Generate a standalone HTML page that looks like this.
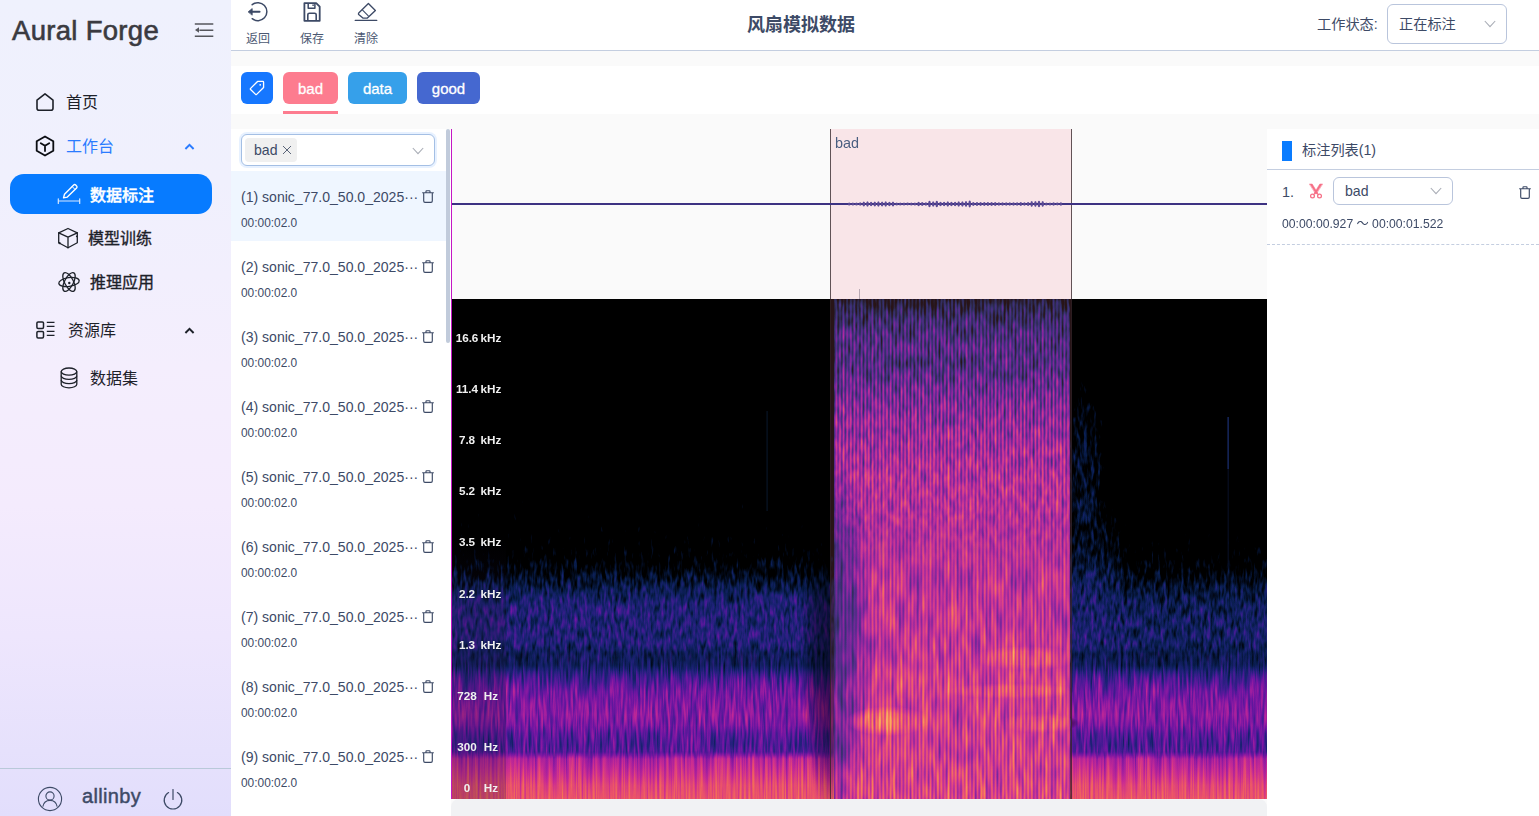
<!DOCTYPE html>
<html lang="zh-CN">
<head>
<meta charset="utf-8">
<title>Aural Forge</title>
<style>
*{box-sizing:border-box;margin:0;padding:0}
html,body{width:1539px;height:816px;overflow:hidden;background:#fafafa}
body{font-family:"Liberation Sans","Noto Sans CJK SC",sans-serif;color:#3d4a66;font-size:14px;position:relative}
.abs{position:absolute}
svg{display:block;overflow:visible}
/* sidebar */
#side{left:0;top:0;width:231px;height:816px;background:linear-gradient(180deg,#eff1fd 0%,#f0f0fd 22%,#f4eefd 45%,#f4ebfd 62%,#eee6fd 78%,#e6e1fc 92%,#e2defc 100%)}
#logo{left:12px;top:11px;font-size:27.5px;line-height:40px;color:#3a3a40;white-space:nowrap;letter-spacing:0.3px;-webkit-text-stroke:0.6px #3a3a40}
.mi{left:0;width:231px;height:40px;font-size:16px;line-height:42px;color:#1d2129;white-space:nowrap}
.mi span{position:absolute;top:0}
.mi svg{position:absolute}
#act{left:10px;top:174px;width:202px;height:40px;border-radius:14px;background:#077bff}
/* topbar */
#top{left:231px;top:0;width:1308px;height:51px;background:#fff;border-bottom:1px solid #c4cee0}
.tb{top:0;width:40px;text-align:center;font-size:12px;color:#4b5872;line-height:14px}
.tb svg{margin:1px auto 0}
.tb div{margin-top:8.5px}
#title{left:231px;width:1140px;top:11px;text-align:center;font-size:18px;line-height:28px;font-weight:bold;color:#3d4a66}
#band{left:231px;top:66px;width:1308px;height:48px;background:#fff}
.tag{top:72px;height:32px;border-radius:6px;color:#fff;font-size:15px;line-height:34px;text-align:center;-webkit-text-stroke:0.3px #fff}
.sel{border:1px solid #b9c5dc;border-radius:6px;background:#fff}
/* list */
#list{left:231px;top:129px;width:220px;height:687px;background:#fff}
.it{left:231px;width:215px;height:70px}
.it .t{position:absolute;left:10px;top:16px;font-size:14.05px;line-height:20px;white-space:nowrap;color:#3d4a66}
.it .d{position:absolute;left:10px;top:44px;font-size:11.9px;line-height:16px;color:#3d4a66}
.it svg{position:absolute;left:191px;top:19px}
.fl{font-family:"Liberation Sans",sans-serif;font-weight:bold;font-size:11.7px;line-height:14px;color:#f0f0f0;white-space:nowrap;text-align:center}
/* right */
#right{left:1267px;top:129px;width:272px;height:687px;background:#fff}
</style>
</head>
<body>

<div id="side" class="abs"></div>
<div id="logo" class="abs">Aural Forge</div>
<svg class="abs" style="left:194px;top:22px" width="20" height="16" viewBox="0 0 20 16" fill="none" stroke="#55565c" stroke-width="1.6"><path d="M0.8 2H19.3M5.4 8.2H19.3M0.8 14.2H19.3"/><path d="M1 8L5 5.3V10.7Z" fill="#55565c" stroke="none"/></svg>

<div class="abs mi" style="top:82px"><svg style="left:35px;top:10px" width="20" height="20" viewBox="0 0 20 20" fill="none" stroke="#1d2129" stroke-width="1.6" stroke-linejoin="round"><path d="M2 8.2L10 1.8L18 8.2V16.2Q18 18.2 16 18.2H4Q2 18.2 2 16.2Z"/></svg><span style="left:66px">首页</span></div>

<div class="abs mi" style="top:126px;color:#2a7bff"><svg style="left:35px;top:9px" width="20" height="22" viewBox="0 0 20 22" fill="none" stroke="#0b0d12" stroke-width="1.8" stroke-linejoin="round" stroke-linecap="round"><path d="M10 1.5L18.3 6.2V15.8L10 20.5L1.7 15.8V6.2Z"/><path d="M5.8 8.2L10 10.8L14.2 8.2M10 10.8V16"/></svg><span style="left:66px">工作台</span><svg style="left:184px;top:16px" width="11" height="8" viewBox="0 0 11 8" fill="none" stroke="#2a7bff" stroke-width="1.9"><path d="M1.4 7L5.5 2.8L9.6 7"/></svg></div>

<div id="act" class="abs"></div>
<div class="abs mi" style="top:175px;color:#fff;font-weight:500"><svg style="left:57px;top:8px" width="24" height="24" viewBox="0 0 24 24" fill="none" stroke="#fff" stroke-width="1.4" stroke-linejoin="round" stroke-linecap="round"><path d="M6.5 14.9L7.5 11.3L16.7 2Q17.7 1 18.7 2L19.6 2.9Q20.6 3.9 19.6 4.9L10.3 14.1Z"/><path d="M15.2 3.6L18 6.4" stroke-width="1"/><path d="M1.3 18H22.7M1.3 15.8V20.4M22.7 15.8V20.4" stroke-width="1.2" stroke="#d8e8ff"/></svg><span style="left:90px;-webkit-text-stroke:0.4px #fff">数据标注</span></div>

<div class="abs mi" style="top:218px"><svg style="left:57px;top:9px" width="22" height="22" viewBox="0 0 22 22" fill="none" stroke="#1d2129" stroke-width="1.3" stroke-linejoin="round" stroke-linecap="round"><path d="M11 1.5L20.3 5.8V15.8L11 20.8L1.7 15.8V5.8Z"/><path d="M1.7 5.8L11 10.2L20.3 5.8M11 10.2V20.8"/><circle cx="2.6" cy="16.2" r="1.1" fill="#1d2129" stroke="none"/><circle cx="19.8" cy="9.3" r="0.9" fill="#1d2129" stroke="none"/></svg><span style="left:88px;-webkit-text-stroke:0.35px #1d2129">模型训练</span></div>

<div class="abs mi" style="top:262px"><svg style="left:57px;top:9px" width="24" height="22" viewBox="0 0 24 22" fill="none" stroke="#1d2129" stroke-width="1.3"><ellipse cx="12" cy="11" rx="10.3" ry="4.4" transform="rotate(-8 12 11)"/><ellipse cx="12" cy="11" rx="10.3" ry="4.4" transform="rotate(62 12 11)"/><ellipse cx="12" cy="11" rx="10.3" ry="4.4" transform="rotate(-62 12 11)"/><circle cx="12.3" cy="12" r="1.2" fill="#1d2129" stroke="none"/></svg><span style="left:90px;-webkit-text-stroke:0.35px #1d2129">推理应用</span></div>

<div class="abs mi" style="top:310px"><svg style="left:36px;top:11px" width="20" height="18" viewBox="0 0 20 18" fill="none" stroke="#1d2129" stroke-width="1.5"><rect x="0.9" y="0.9" width="6.6" height="6.6" rx="1.2"/><rect x="0.9" y="10.4" width="6.6" height="6.6" rx="1.2"/><path d="M10.8 1.4H18.5M10.8 5.4H18.5M10.8 10.4H18.5M10.8 14.4H18.5" stroke-width="1.3"/></svg><span style="left:68px">资源库</span><svg style="left:184px;top:16px" width="11" height="8" viewBox="0 0 11 8" fill="none" stroke="#1d2129" stroke-width="1.9"><path d="M1.4 7L5.5 2.8L9.6 7"/></svg></div>

<div class="abs mi" style="top:358px"><svg style="left:60px;top:9px" width="18" height="22" viewBox="0 0 18 22" fill="none" stroke="#1d2129" stroke-width="1.3"><ellipse cx="9" cy="4.6" rx="7.8" ry="3.6"/><path d="M1.2 4.6V17.2C1.2 19.2 4.7 20.8 9 20.8S16.8 19.2 16.8 17.2V4.6"/><path d="M1.2 8.8C1.2 10.8 4.7 12.4 9 12.4S16.8 10.8 16.8 8.8M1.2 13C1.2 15 4.7 16.6 9 16.6S16.8 15 16.8 13"/></svg><span style="left:90px">数据集</span></div>

<div class="abs" style="left:0;top:768px;width:231px;height:1px;background:#b9c9d9"></div>
<svg class="abs" style="left:37px;top:786px" width="26" height="26" viewBox="0 0 26 26" fill="none" stroke="#3d4a66" stroke-width="1.1"><circle cx="13" cy="13" r="11.6"/><circle cx="13" cy="10" r="4.1"/><path d="M5.8 20.6C6.6 16.4 9.6 14.4 13 14.4S19.4 16.4 20.2 20.6"/></svg>
<div class="abs" style="left:82px;top:781px;font-size:20px;line-height:30px;color:#3d4a66;-webkit-text-stroke:0.45px #3d4a66;letter-spacing:0.35px">allinby</div>
<svg class="abs" style="left:162px;top:788px" width="22" height="22" viewBox="0 0 22 22" fill="none" stroke="#3d4a66" stroke-width="1.2" stroke-linecap="round"><path d="M11 1.5V11.5"/><path d="M6.6 4.6A8.8 8.8 0 1 0 15.4 4.6"/></svg>

<div id="top" class="abs"></div>
<div class="abs tb" style="left:238px"><svg width="24" height="22" viewBox="0 0 24 22" fill="none" stroke="#3d4a66" stroke-width="1.5" stroke-linecap="round" stroke-linejoin="round"><path d="M6.2 3.7A9 9 0 1 1 6.2 17.7"/><path d="M4 10.7H13.6" stroke-width="1.9"/><path d="M2.4 10.7L6.2 7.6V13.8Z" fill="#3d4a66" stroke-width="0.8"/></svg><div>返回</div></div>
<div class="abs tb" style="left:292px"><svg width="20" height="22" viewBox="0 0 20 22" fill="none" stroke="#3d4a66" stroke-width="1.8" stroke-linejoin="round"><path d="M2.4 2.2H14.2L17.7 5.7V19.8H2.4Z"/><path d="M6.2 2.2V7.2H12.9V2.2" stroke-width="1.5"/><rect x="10.4" y="3.4" width="1.4" height="1.6" fill="#3d4a66" stroke="none"/><path d="M5.8 19.8V13.8Q5.8 12.2 7.4 12.2H12.6Q14.2 12.2 14.2 13.8V19.8" stroke-width="1.6"/></svg><div>保存</div></div>
<div class="abs tb" style="left:346px"><svg width="24" height="22" viewBox="0 0 24 22" fill="none" stroke="#3d4a66" stroke-width="1.35" stroke-linejoin="round" stroke-linecap="round"><path d="M14.4 2.4L21.4 9.4L13.4 17.1H8.9L4.7 13.4Q4.1 12.8 4.7 12.1Z"/><path d="M8.6 9.2L14.3 14.9" stroke-width="1.1"/><path d="M1.2 19.4H22.8" stroke-width="1.2"/></svg><div>清除</div></div>
<div id="title" class="abs">风扇模拟数据</div>
<div class="abs" style="left:1317px;top:14px;font-size:14.2px;line-height:20px;color:#3d4a66">工作状态:</div>
<div class="abs sel" style="left:1387px;top:4px;width:120px;height:40px"></div>
<div class="abs" style="left:1399px;top:14px;font-size:14.2px;line-height:20px;color:#3d4a66">正在标注</div>
<div class="abs" style="left:1484px;top:20px"><svg width="12" height="8" viewBox="0 0 12 8" fill="none" stroke="#a9adb6" stroke-width="1.1"><path d="M0.8 1L6 6.6L11.2 1"/></svg></div>
<div id="band" class="abs"></div>
<div class="abs tag" style="left:241px;width:32px;background:#1677ff"><svg style="margin:8px 0 0 8px" width="16" height="16" viewBox="0 0 18 18" fill="none" stroke="#fff" stroke-width="1.5" stroke-linejoin="round"><path d="M9.6 1.6H15.6Q16.4 1.6 16.4 2.4V8.4L8.6 16.2Q8 16.8 7.4 16.2L1.8 10.6Q1.2 10 1.8 9.4Z"/><circle cx="12.6" cy="5.4" r="1" fill="#fff" stroke="none"/></svg></div>
<div class="abs tag" style="left:283px;width:55px;background:#fd7c8f">bad</div>
<div class="abs" style="left:283px;top:111px;width:55px;height:3px;background:#fd7c8f"></div>
<div class="abs tag" style="left:348px;width:59px;background:#36a0ea">data</div>
<div class="abs tag" style="left:417px;width:63px;background:#4568d0">good</div>
<div id="list" class="abs"></div>
<div class="abs" style="left:231px;top:171px;width:215px;height:70px;background:#eff6ff"></div>
<div class="abs sel" style="left:241px;top:134px;width:194px;height:32px;border-color:#a4bfe4;box-shadow:0 0 0 2px rgba(22,119,255,0.1)"></div>
<div class="abs" style="left:245px;top:138px;width:52px;height:24px;border-radius:4px;background:#f0f0f0;font-size:14.1px;line-height:24px;padding-left:9px;color:#3d4a66;white-space:nowrap">bad<svg style="position:absolute;left:37px;top:7px" width="10" height="10" viewBox="0 0 10 10" stroke="#5a6478" stroke-width="1" fill="none"><path d="M1 1L9 9M9 1L1 9"/></svg></div>
<div class="abs" style="left:412px;top:147px"><svg width="12" height="8" viewBox="0 0 12 8" fill="none" stroke="#a9adb6" stroke-width="1.1"><path d="M0.8 1L6 6.6L11.2 1"/></svg></div>
<div class="abs it" style="top:171px"><div class="t">(1) sonic_77.0_50.0_2025···</div><div class="d">00:00:02.0</div><svg width="12" height="13" viewBox="0 0 12 13" fill="none" stroke="#3d4a66" stroke-width="1.15" stroke-linejoin="round" stroke-linecap="round"><path d="M0.6 2.7H11.4M4 2.5V1.3Q4 0.7 4.6 0.7H7.4Q8 0.7 8 1.3V2.5M1.7 2.9V11Q1.7 12.3 3 12.3H9Q10.3 12.3 10.3 11V2.9"/></svg></div>
<div class="abs it" style="top:241px"><div class="t">(2) sonic_77.0_50.0_2025···</div><div class="d">00:00:02.0</div><svg width="12" height="13" viewBox="0 0 12 13" fill="none" stroke="#3d4a66" stroke-width="1.15" stroke-linejoin="round" stroke-linecap="round"><path d="M0.6 2.7H11.4M4 2.5V1.3Q4 0.7 4.6 0.7H7.4Q8 0.7 8 1.3V2.5M1.7 2.9V11Q1.7 12.3 3 12.3H9Q10.3 12.3 10.3 11V2.9"/></svg></div>
<div class="abs it" style="top:311px"><div class="t">(3) sonic_77.0_50.0_2025···</div><div class="d">00:00:02.0</div><svg width="12" height="13" viewBox="0 0 12 13" fill="none" stroke="#3d4a66" stroke-width="1.15" stroke-linejoin="round" stroke-linecap="round"><path d="M0.6 2.7H11.4M4 2.5V1.3Q4 0.7 4.6 0.7H7.4Q8 0.7 8 1.3V2.5M1.7 2.9V11Q1.7 12.3 3 12.3H9Q10.3 12.3 10.3 11V2.9"/></svg></div>
<div class="abs it" style="top:381px"><div class="t">(4) sonic_77.0_50.0_2025···</div><div class="d">00:00:02.0</div><svg width="12" height="13" viewBox="0 0 12 13" fill="none" stroke="#3d4a66" stroke-width="1.15" stroke-linejoin="round" stroke-linecap="round"><path d="M0.6 2.7H11.4M4 2.5V1.3Q4 0.7 4.6 0.7H7.4Q8 0.7 8 1.3V2.5M1.7 2.9V11Q1.7 12.3 3 12.3H9Q10.3 12.3 10.3 11V2.9"/></svg></div>
<div class="abs it" style="top:451px"><div class="t">(5) sonic_77.0_50.0_2025···</div><div class="d">00:00:02.0</div><svg width="12" height="13" viewBox="0 0 12 13" fill="none" stroke="#3d4a66" stroke-width="1.15" stroke-linejoin="round" stroke-linecap="round"><path d="M0.6 2.7H11.4M4 2.5V1.3Q4 0.7 4.6 0.7H7.4Q8 0.7 8 1.3V2.5M1.7 2.9V11Q1.7 12.3 3 12.3H9Q10.3 12.3 10.3 11V2.9"/></svg></div>
<div class="abs it" style="top:521px"><div class="t">(6) sonic_77.0_50.0_2025···</div><div class="d">00:00:02.0</div><svg width="12" height="13" viewBox="0 0 12 13" fill="none" stroke="#3d4a66" stroke-width="1.15" stroke-linejoin="round" stroke-linecap="round"><path d="M0.6 2.7H11.4M4 2.5V1.3Q4 0.7 4.6 0.7H7.4Q8 0.7 8 1.3V2.5M1.7 2.9V11Q1.7 12.3 3 12.3H9Q10.3 12.3 10.3 11V2.9"/></svg></div>
<div class="abs it" style="top:591px"><div class="t">(7) sonic_77.0_50.0_2025···</div><div class="d">00:00:02.0</div><svg width="12" height="13" viewBox="0 0 12 13" fill="none" stroke="#3d4a66" stroke-width="1.15" stroke-linejoin="round" stroke-linecap="round"><path d="M0.6 2.7H11.4M4 2.5V1.3Q4 0.7 4.6 0.7H7.4Q8 0.7 8 1.3V2.5M1.7 2.9V11Q1.7 12.3 3 12.3H9Q10.3 12.3 10.3 11V2.9"/></svg></div>
<div class="abs it" style="top:661px"><div class="t">(8) sonic_77.0_50.0_2025···</div><div class="d">00:00:02.0</div><svg width="12" height="13" viewBox="0 0 12 13" fill="none" stroke="#3d4a66" stroke-width="1.15" stroke-linejoin="round" stroke-linecap="round"><path d="M0.6 2.7H11.4M4 2.5V1.3Q4 0.7 4.6 0.7H7.4Q8 0.7 8 1.3V2.5M1.7 2.9V11Q1.7 12.3 3 12.3H9Q10.3 12.3 10.3 11V2.9"/></svg></div>
<div class="abs it" style="top:731px"><div class="t">(9) sonic_77.0_50.0_2025···</div><div class="d">00:00:02.0</div><svg width="12" height="13" viewBox="0 0 12 13" fill="none" stroke="#3d4a66" stroke-width="1.15" stroke-linejoin="round" stroke-linecap="round"><path d="M0.6 2.7H11.4M4 2.5V1.3Q4 0.7 4.6 0.7H7.4Q8 0.7 8 1.3V2.5M1.7 2.9V11Q1.7 12.3 3 12.3H9Q10.3 12.3 10.3 11V2.9"/></svg></div>
<div class="abs" style="left:446px;top:129px;width:4px;height:214px;border-radius:2px;background:#c1cbdb"></div>
<!--MAIN-->
<div class="abs" style="left:451px;top:129px;width:816px;height:170px;background:#fafafa"></div>
<svg class="abs" style="left:451px;top:299px" width="816" height="500" viewBox="0 0 816 500">
<defs>
<linearGradient id="gO" gradientUnits="userSpaceOnUse" x1="0" y1="0" x2="0" y2="500"><stop offset="0.0000" stop-color="#000000"/><stop offset="0.2820" stop-color="#000000"/><stop offset="0.3420" stop-color="#0d0d0d"/><stop offset="0.3920" stop-color="#181818"/><stop offset="0.4420" stop-color="#242424"/><stop offset="0.4920" stop-color="#333333"/><stop offset="0.5220" stop-color="#434343"/><stop offset="0.5520" stop-color="#575757"/><stop offset="0.5780" stop-color="#6d6d6d"/><stop offset="0.6140" stop-color="#808080"/><stop offset="0.6820" stop-color="#818181"/><stop offset="0.7080" stop-color="#737373"/><stop offset="0.7320" stop-color="#757575"/><stop offset="0.7600" stop-color="#929292"/><stop offset="0.7860" stop-color="#a4a4a4"/><stop offset="0.8320" stop-color="#adadad"/><stop offset="0.8520" stop-color="#a8a8a8"/><stop offset="0.8680" stop-color="#9b9b9b"/><stop offset="0.8920" stop-color="#959595"/><stop offset="0.9060" stop-color="#9b9b9b"/><stop offset="0.9120" stop-color="#a8a8a8"/><stop offset="0.9200" stop-color="#bdbdbd"/><stop offset="0.9420" stop-color="#c8c8c8"/><stop offset="0.9720" stop-color="#d7d7d7"/><stop offset="1.0000" stop-color="#dcdcdc"/></linearGradient>
<linearGradient id="gI" gradientUnits="userSpaceOnUse" x1="0" y1="0" x2="0" y2="500"><stop offset="0.0000" stop-color="#6b6b6b"/><stop offset="0.0140" stop-color="#7a7a7a"/><stop offset="0.0320" stop-color="#8a8a8a"/><stop offset="0.0680" stop-color="#9e9e9e"/><stop offset="0.1020" stop-color="#a7a7a7"/><stop offset="0.1260" stop-color="#a0a0a0"/><stop offset="0.1520" stop-color="#a9a9a9"/><stop offset="0.1820" stop-color="#b8b8b8"/><stop offset="0.2420" stop-color="#c6c6c6"/><stop offset="0.3020" stop-color="#cecece"/><stop offset="0.3680" stop-color="#d2d2d2"/><stop offset="0.4620" stop-color="#cacaca"/><stop offset="0.5520" stop-color="#d0d0d0"/><stop offset="0.6420" stop-color="#d3d3d3"/><stop offset="0.7360" stop-color="#d7d7d7"/><stop offset="0.8220" stop-color="#dbdbdb"/><stop offset="0.8820" stop-color="#dbdbdb"/><stop offset="0.9060" stop-color="#dbdbdb"/><stop offset="0.9220" stop-color="#dcdcdc"/><stop offset="1.0000" stop-color="#e2e2e2"/></linearGradient>
<radialGradient id="rw"><stop offset="0" stop-color="#fff" stop-opacity="1"/><stop offset="0.55" stop-color="#fff" stop-opacity="0.75"/><stop offset="1" stop-color="#fff" stop-opacity="0"/></radialGradient>
<radialGradient id="rb"><stop offset="0" stop-color="#000" stop-opacity="1"/><stop offset="0.5" stop-color="#000" stop-opacity="0.7"/><stop offset="1" stop-color="#000" stop-opacity="0"/></radialGradient>
<linearGradient id="sg1" x1="0" y1="0" x2="1" y2="0"><stop offset="0" stop-color="#000" stop-opacity="0.2"/><stop offset="0.3" stop-color="#000" stop-opacity="0.16"/><stop offset="0.5" stop-color="#000" stop-opacity="0"/><stop offset="0.8" stop-color="#000" stop-opacity="0"/><stop offset="1" stop-color="#000" stop-opacity="0.2"/></linearGradient>
<filter id="fa" x="0" y="0" width="100%" height="100%" color-interpolation-filters="sRGB"><feTurbulence type="fractalNoise" baseFrequency="0.3 0.085" numOctaves="2" seed="4" result="n"/><feColorMatrix in="n" type="matrix" values="1 0 0 0 0 1 0 0 0 0 1 0 0 0 0 0 0 0 0 1" result="ng"/><feComposite in="SourceGraphic" in2="ng" operator="arithmetic" k1="-0.5333" k2="1.6667" k3="0.7800" k4="-0.7900" result="c"/><feComponentTransfer in="c"><feFuncR type="table" tableValues="0.000 0.012 0.035 0.110 0.259 0.439 0.627 0.792 0.914 0.969 0.980"/><feFuncG type="table" tableValues="0.000 0.047 0.118 0.133 0.110 0.086 0.118 0.173 0.314 0.494 0.706"/><feFuncB type="table" tableValues="0.000 0.125 0.306 0.463 0.573 0.635 0.627 0.573 0.424 0.306 0.353"/></feComponentTransfer></filter>
<filter id="fc" x="0" y="0" width="100%" height="100%" color-interpolation-filters="sRGB"><feTurbulence type="fractalNoise" baseFrequency="0.4 0.035" numOctaves="2" seed="7" result="n"/><feColorMatrix in="n" type="matrix" values="1 0 0 0 0 1 0 0 0 0 1 0 0 0 0 0 0 0 0 1" result="ng"/><feComposite in="SourceGraphic" in2="ng" operator="arithmetic" k1="-0.6000" k2="1.7000" k3="0.8800" k4="-0.8400" result="c"/><feComponentTransfer in="c"><feFuncR type="table" tableValues="0.000 0.012 0.035 0.110 0.259 0.439 0.627 0.792 0.914 0.969 0.980"/><feFuncG type="table" tableValues="0.000 0.047 0.118 0.133 0.110 0.086 0.118 0.173 0.314 0.494 0.706"/><feFuncB type="table" tableValues="0.000 0.125 0.306 0.463 0.573 0.635 0.627 0.573 0.424 0.306 0.353"/></feComponentTransfer></filter>
<linearGradient id="mgc" gradientUnits="userSpaceOnUse" x1="0" y1="348" x2="0" y2="372"><stop offset="0" stop-color="#000"/><stop offset="1" stop-color="#fff"/></linearGradient><mask id="mc" maskUnits="userSpaceOnUse" x="0" y="0" width="816" height="500"><rect x="0" y="0" width="816" height="500" fill="url(#mgc)"/></mask>
<filter id="fd" x="0" y="0" width="100%" height="100%" color-interpolation-filters="sRGB"><feTurbulence type="fractalNoise" baseFrequency="0.45 0.012" numOctaves="2" seed="11" result="n"/><feColorMatrix in="n" type="matrix" values="1 0 0 0 0 1 0 0 0 0 1 0 0 0 0 0 0 0 0 1" result="ng"/><feComposite in="SourceGraphic" in2="ng" operator="arithmetic" k1="-0.5000" k2="1.6500" k3="0.7500" k4="-0.7750" result="c"/><feComponentTransfer in="c"><feFuncR type="table" tableValues="0.000 0.012 0.035 0.110 0.259 0.439 0.627 0.792 0.914 0.969 0.980"/><feFuncG type="table" tableValues="0.000 0.047 0.118 0.133 0.110 0.086 0.118 0.173 0.314 0.494 0.706"/><feFuncB type="table" tableValues="0.000 0.125 0.306 0.463 0.573 0.635 0.627 0.573 0.424 0.306 0.353"/></feComponentTransfer></filter>
<linearGradient id="mgd" gradientUnits="userSpaceOnUse" x1="0" y1="452" x2="0" y2="459"><stop offset="0" stop-color="#000"/><stop offset="1" stop-color="#fff"/></linearGradient><mask id="md" maskUnits="userSpaceOnUse" x="0" y="0" width="816" height="500"><rect x="0" y="0" width="816" height="500" fill="url(#mgd)"/></mask>
<filter id="fr" x="0" y="0" width="100%" height="100%" color-interpolation-filters="sRGB"><feTurbulence type="fractalNoise" baseFrequency="0.21 0.07" numOctaves="2" seed="21" result="n"/><feColorMatrix in="n" type="matrix" values="1 0 0 0 0 1 0 0 0 0 1 0 0 0 0 0 0 0 0 1" result="ng"/><feComposite in="SourceGraphic" in2="ng" operator="arithmetic" k1="-0.4000" k2="1.6000" k3="0.7200" k4="-0.7600" result="c"/><feComponentTransfer in="c"><feFuncR type="table" tableValues="0.000 0.012 0.035 0.110 0.259 0.439 0.627 0.792 0.914 0.969 0.980"/><feFuncG type="table" tableValues="0.000 0.047 0.118 0.133 0.110 0.086 0.118 0.173 0.314 0.494 0.706"/><feFuncB type="table" tableValues="0.000 0.125 0.306 0.463 0.573 0.635 0.627 0.573 0.424 0.306 0.353"/></feComponentTransfer></filter>
<filter id="fs" x="0" y="0" width="100%" height="100%" color-interpolation-filters="sRGB"><feTurbulence type="fractalNoise" baseFrequency="0.17 0.03" numOctaves="2" seed="33" result="n"/><feColorMatrix in="n" type="matrix" values="1 0 0 0 0 1 0 0 0 0 1 0 0 0 0 0 0 0 0 1" result="ng"/><feComposite in="SourceGraphic" in2="ng" operator="arithmetic" k1="-0.2667" k2="1.5333" k3="0.7000" k4="-0.7500" result="c"/><feComponentTransfer in="c"><feFuncR type="table" tableValues="0.000 0.012 0.035 0.110 0.259 0.439 0.627 0.792 0.914 0.969 0.980"/><feFuncG type="table" tableValues="0.000 0.047 0.118 0.133 0.110 0.086 0.118 0.173 0.314 0.494 0.706"/><feFuncB type="table" tableValues="0.000 0.125 0.306 0.463 0.573 0.635 0.627 0.573 0.424 0.306 0.353"/></feComponentTransfer></filter>
<linearGradient id="ml" gradientUnits="userSpaceOnUse" x1="0" y1="215" x2="0" y2="285"><stop offset="0" stop-color="#000"/><stop offset="1" stop-color="#fff"/></linearGradient><mask id="mlo" maskUnits="userSpaceOnUse" x="0" y="0" width="816" height="500"><rect x="0" y="0" width="816" height="500" fill="url(#ml)"/></mask>
<linearGradient id="mg" x1="0" y1="0" x2="0" y2="1"><stop offset="0" stop-color="#fff"/><stop offset="0.45" stop-color="#fff"/><stop offset="1" stop-color="#000"/></linearGradient><mask id="mt" maskUnits="userSpaceOnUse" x="0" y="0" width="816" height="220"><rect x="0" y="0" width="816" height="220" fill="url(#mg)"/></mask>
<pattern id="st" patternUnits="userSpaceOnUse" x="383" y="0" width="3.62" height="500"><rect x="0" y="0" width="3.62" height="500" fill="url(#sg1)"/></pattern>
<g id="so"><rect width="816" height="500" fill="url(#gO)"/><ellipse cx="632" cy="150" rx="30" ry="95" fill="url(#rw)" fill-opacity="0.36"/><ellipse cx="642" cy="250" rx="40" ry="60" fill="url(#rw)" fill-opacity="0.2"/><ellipse cx="735" cy="300" rx="140" ry="80" fill="url(#rb)" fill-opacity="0.13"/></g>
</defs>
<rect width="816" height="500" fill="#000"/>
<g filter="url(#fa)"><use href="#so"/></g>
<g mask="url(#mc)"><g filter="url(#fc)"><use href="#so"/></g></g>
<g mask="url(#md)"><g filter="url(#fd)"><use href="#so"/></g></g>
<defs><g id="si"><rect x="383" y="0" width="236.3" height="500" fill="url(#gI)"/><ellipse cx="384" cy="340" rx="38" ry="200" fill="url(#rb)" fill-opacity="0.3"/><ellipse cx="437" cy="422" rx="42" ry="15" fill="url(#rw)" fill-opacity="1"/><ellipse cx="575" cy="359" rx="54" ry="12" fill="url(#rw)" fill-opacity="0.6"/><ellipse cx="560" cy="392" rx="66" ry="8" fill="url(#rw)" fill-opacity="0.45"/><ellipse cx="588" cy="424" rx="42" ry="10" fill="url(#rw)" fill-opacity="0.5"/><ellipse cx="520" cy="240" rx="60" ry="40" fill="url(#rw)" fill-opacity="0.08"/><rect x="383" y="0" width="236.3" height="500" fill="url(#st)"/><g mask="url(#mt)"><rect x="383" y="0" width="236.3" height="220" fill="url(#st)"/></g></g></defs>
<svg x="383" y="0" width="236.3" height="500" viewBox="383 0 236.3 500"><g filter="url(#fr)"><use href="#si"/></g><g mask="url(#mlo)"><g filter="url(#fs)"><use href="#si"/></g></g></svg>
<rect x="315.5" y="112" width="1.2" height="100" fill="#1c4a8a" fill-opacity="0.28"/>
<rect x="776.4" y="118" width="1.5" height="52" fill="#24409a" fill-opacity="0.6"/><rect x="776.6" y="170" width="1.2" height="130" fill="#24409a" fill-opacity="0.22"/>
</svg>
<div class="abs" style="left:451px;top:299px;width:55px;height:500px;background:linear-gradient(180deg,rgba(30,20,60,0) 0%,rgba(30,20,60,0) 48%,rgba(30,20,60,0.22) 62%,rgba(30,20,60,0.22) 100%)"></div>
<div class="abs fl" style="left:447px;top:330.5px;width:40px">16.6</div><div class="abs fl" style="left:471px;top:330.5px;width:40px">kHz</div>
<div class="abs fl" style="left:447px;top:381.5px;width:40px">11.4</div><div class="abs fl" style="left:471px;top:381.5px;width:40px">kHz</div>
<div class="abs fl" style="left:447px;top:432.5px;width:40px">7.8</div><div class="abs fl" style="left:471px;top:432.5px;width:40px">kHz</div>
<div class="abs fl" style="left:447px;top:483.5px;width:40px">5.2</div><div class="abs fl" style="left:471px;top:483.5px;width:40px">kHz</div>
<div class="abs fl" style="left:447px;top:534.5px;width:40px">3.5</div><div class="abs fl" style="left:471px;top:534.5px;width:40px">kHz</div>
<div class="abs fl" style="left:447px;top:586.5px;width:40px">2.2</div><div class="abs fl" style="left:471px;top:586.5px;width:40px">kHz</div>
<div class="abs fl" style="left:447px;top:637.5px;width:40px">1.3</div><div class="abs fl" style="left:471px;top:637.5px;width:40px">kHz</div>
<div class="abs fl" style="left:447px;top:688.5px;width:40px">728</div><div class="abs fl" style="left:471px;top:688.5px;width:40px">Hz</div>
<div class="abs fl" style="left:447px;top:739.5px;width:40px">300</div><div class="abs fl" style="left:471px;top:739.5px;width:40px">Hz</div>
<div class="abs fl" style="left:447px;top:780.5px;width:40px">0</div><div class="abs fl" style="left:471px;top:780.5px;width:40px">Hz</div>

<div class="abs" style="left:829.5px;top:129px;width:242.5px;height:670px;background:rgba(251,123,142,0.16);border-left:1.5px solid rgba(45,32,38,0.75);border-right:1.5px solid rgba(45,32,38,0.75)"></div>
<div class="abs" style="left:835px;top:133px;font-size:14.4px;line-height:20px;color:#4a5e80">bad</div>
<svg class="abs" style="left:451px;top:129px" width="816" height="170" viewBox="0 129 816 170"><rect x="0" y="203" width="816" height="2" fill="#3d3282"/><g fill="#5b4a94"><ellipse cx="398.2" cy="204" rx="1.3" ry="1.5"/><ellipse cx="401.9" cy="204" rx="1.3" ry="1.6"/><ellipse cx="405.5" cy="204" rx="1.3" ry="1.6"/><ellipse cx="409.2" cy="204" rx="1.3" ry="1.7"/><ellipse cx="412.8" cy="204" rx="1.3" ry="2.6"/><ellipse cx="416.5" cy="204" rx="1.3" ry="2.8"/><ellipse cx="420.1" cy="204" rx="1.3" ry="2.2"/><ellipse cx="423.8" cy="204" rx="1.3" ry="2.5"/><ellipse cx="427.4" cy="204" rx="1.3" ry="2.8"/><ellipse cx="431.1" cy="204" rx="1.3" ry="2.6"/><ellipse cx="434.7" cy="204" rx="1.3" ry="2.7"/><ellipse cx="438.4" cy="204" rx="1.3" ry="2.3"/><ellipse cx="442.0" cy="204" rx="1.3" ry="2.5"/><ellipse cx="445.7" cy="204" rx="1.3" ry="1.5"/><ellipse cx="449.3" cy="204" rx="1.3" ry="1.6"/><ellipse cx="453.0" cy="204" rx="1.3" ry="1.6"/><ellipse cx="456.6" cy="204" rx="1.3" ry="1.4"/><ellipse cx="460.3" cy="204" rx="1.3" ry="1.5"/><ellipse cx="463.9" cy="204" rx="1.3" ry="1.5"/><ellipse cx="467.6" cy="204" rx="1.3" ry="2.2"/><ellipse cx="471.2" cy="204" rx="1.3" ry="2.1"/><ellipse cx="474.9" cy="204" rx="1.3" ry="1.8"/><ellipse cx="478.5" cy="204" rx="1.3" ry="3.3"/><ellipse cx="482.2" cy="204" rx="1.3" ry="2.8"/><ellipse cx="485.8" cy="204" rx="1.3" ry="3.2"/><ellipse cx="489.5" cy="204" rx="1.3" ry="2.3"/><ellipse cx="493.1" cy="204" rx="1.3" ry="2.2"/><ellipse cx="496.8" cy="204" rx="1.3" ry="2.7"/><ellipse cx="500.4" cy="204" rx="1.3" ry="2.3"/><ellipse cx="504.1" cy="204" rx="1.3" ry="2.3"/><ellipse cx="507.7" cy="204" rx="1.3" ry="2.8"/><ellipse cx="511.4" cy="204" rx="1.3" ry="2.7"/><ellipse cx="515.0" cy="204" rx="1.3" ry="2.9"/><ellipse cx="518.7" cy="204" rx="1.3" ry="3.4"/><ellipse cx="522.3" cy="204" rx="1.3" ry="2.0"/><ellipse cx="526.0" cy="204" rx="1.3" ry="2.1"/><ellipse cx="529.6" cy="204" rx="1.3" ry="1.9"/><ellipse cx="533.3" cy="204" rx="1.3" ry="2.1"/><ellipse cx="536.9" cy="204" rx="1.3" ry="2.0"/><ellipse cx="540.6" cy="204" rx="1.3" ry="2.1"/><ellipse cx="544.2" cy="204" rx="1.3" ry="2.1"/><ellipse cx="547.9" cy="204" rx="1.3" ry="1.8"/><ellipse cx="551.5" cy="204" rx="1.3" ry="1.8"/><ellipse cx="555.2" cy="204" rx="1.3" ry="1.7"/><ellipse cx="558.8" cy="204" rx="1.3" ry="1.7"/><ellipse cx="562.5" cy="204" rx="1.3" ry="1.7"/><ellipse cx="566.1" cy="204" rx="1.3" ry="1.8"/><ellipse cx="569.8" cy="204" rx="1.3" ry="1.9"/><ellipse cx="573.4" cy="204" rx="1.3" ry="1.7"/><ellipse cx="577.1" cy="204" rx="1.3" ry="2.0"/><ellipse cx="580.7" cy="204" rx="1.3" ry="2.9"/><ellipse cx="584.4" cy="204" rx="1.3" ry="2.9"/><ellipse cx="588.0" cy="204" rx="1.3" ry="3.2"/><ellipse cx="591.7" cy="204" rx="1.3" ry="3.0"/><ellipse cx="595.3" cy="204" rx="1.3" ry="1.5"/><ellipse cx="599.0" cy="204" rx="1.3" ry="1.6"/><ellipse cx="602.6" cy="204" rx="1.3" ry="1.7"/><ellipse cx="606.3" cy="204" rx="1.3" ry="1.4"/><ellipse cx="609.9" cy="204" rx="1.3" ry="1.8"/></g><rect x="408" y="289" width="1" height="10" fill="#b9a9b4"/></svg>
<div class="abs" style="left:451px;top:129px;width:1px;height:670px;background:#c418c4"></div>
<div class="abs" style="left:451px;top:799px;width:816px;height:17px;background:#f1f2f4;border-radius:8px 8px 0 0"></div>
<!--/MAIN-->
<div id="right" class="abs"></div>
<div class="abs" style="left:1282px;top:141px;width:10px;height:20px;background:#0a7cff"></div>
<div class="abs" style="left:1302px;top:140px;font-size:14.2px;line-height:20px;color:#3d4a66;white-space:nowrap">标注列表(1)</div>
<div class="abs" style="left:1267px;top:169px;width:272px;height:1px;background:#c4cee0"></div>
<div class="abs" style="left:1282px;top:182px;font-size:14.4px;line-height:20px;color:#3d4a66">1.</div>
<svg class="abs" style="left:1308px;top:183px" width="16" height="16" viewBox="0 0 16 16" fill="none" stroke="#f66f86" stroke-width="1.25" stroke-linecap="round"><path d="M1.7 1L4.2 1L9.7 9.9L8 10.8Z" fill="#f66f86" stroke-width="0.5" stroke-linejoin="round"/><path d="M14.3 1L11.8 1L6.3 9.9L8 10.8Z" fill="#f66f86" stroke-width="0.5" stroke-linejoin="round"/><path d="M6.9 10.4L5.6 11.6M9.1 10.4L10.4 11.6"/><circle cx="4.5" cy="13" r="1.9"/><circle cx="11.5" cy="13" r="1.9"/></svg>
<div class="abs sel" style="left:1333px;top:177px;width:120px;height:28px"></div>
<div class="abs" style="left:1345px;top:181px;font-size:14.1px;line-height:20px;color:#3d4a66">bad</div>
<div class="abs" style="left:1430px;top:187px"><svg width="12" height="8" viewBox="0 0 12 8" fill="none" stroke="#a9adb6" stroke-width="1.1"><path d="M0.8 1L6 6.6L11.2 1"/></svg></div>
<div class="abs" style="left:1519px;top:186px"><svg width="12" height="13" viewBox="0 0 12 13" fill="none" stroke="#3d4a66" stroke-width="1.15" stroke-linejoin="round" stroke-linecap="round"><path d="M0.6 2.7H11.4M4 2.5V1.3Q4 0.7 4.6 0.7H7.4Q8 0.7 8 1.3V2.5M1.7 2.9V11Q1.7 12.3 3 12.3H9Q10.3 12.3 10.3 11V2.9"/></svg></div>
<div class="abs" style="left:1282px;top:216px;font-size:12.2px;line-height:16px;color:#3d4a66;white-space:nowrap">00:00:00.927 ～ 00:00:01.522</div>
<div class="abs" style="left:1267px;top:244px;width:272px;height:0;border-top:1px dashed #c4cee0"></div>
</body>
</html>
